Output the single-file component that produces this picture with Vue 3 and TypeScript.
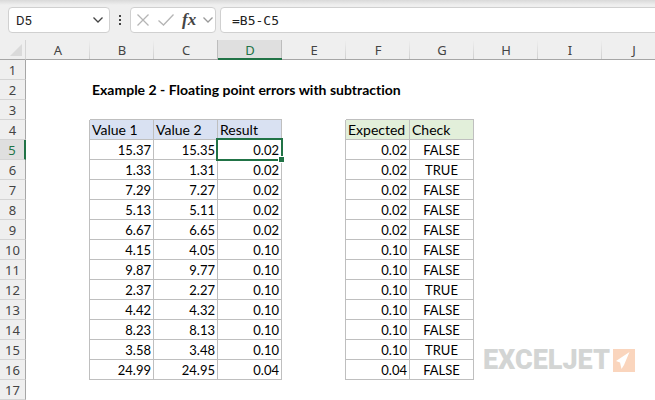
<script setup lang="ts">
import { ref } from 'vue'

type Row = [string, string, string, string, string]

const columns = ['A', 'B', 'C', 'D', 'E', 'F', 'G', 'H', 'I', 'J']
const firstDataRow = 5
const activeRow = 5
const activeColumn = 'D'
const cellName = ref('D5')
const formula = ref('=B5-C5')

const rows: Row[] = [
  ['15.37', '15.35', '0.02', '0.02', 'FALSE'],
  ['1.33', '1.31', '0.02', '0.02', 'TRUE'],
  ['7.29', '7.27', '0.02', '0.02', 'FALSE'],
  ['5.13', '5.11', '0.02', '0.02', 'FALSE'],
  ['6.67', '6.65', '0.02', '0.02', 'FALSE'],
  ['4.15', '4.05', '0.10', '0.10', 'FALSE'],
  ['9.87', '9.77', '0.10', '0.10', 'FALSE'],
  ['2.37', '2.27', '0.10', '0.10', 'TRUE'],
  ['4.42', '4.32', '0.10', '0.10', 'FALSE'],
  ['8.23', '8.13', '0.10', '0.10', 'FALSE'],
  ['3.58', '3.48', '0.10', '0.10', 'TRUE'],
  ['24.99', '24.95', '0.04', '0.04', 'FALSE'],
]
</script>

<template>
  <main class="app">
    <header class="bar">
      <div class="box name-box">
        <input v-model="cellName" class="name" type="text" aria-label="Name box" />
        <button class="icon" type="button" aria-label="Show names">
          <svg width="12" height="8" viewBox="0 0 12 8"><path d="M1.500 1.500 6 6l4.500-4.500" fill="none" stroke="#444" stroke-width="1.300" /></svg>
        </button>
      </div>
      <svg class="grip" width="4" height="12" viewBox="0 0 4 12" fill="#444"><path d="M1 1h2v2H1zM1 5h2v2H1zM1 9h2v2H1z" /></svg>
      <div class="box tools">
        <button class="icon" type="button" aria-label="Cancel">
          <svg width="14" height="14" viewBox="0 0 14 14"><path d="m1.500 1.500 11 11m0-11-11 11" fill="none" stroke="#b5b5b5" stroke-width="1.300" /></svg>
        </button>
        <button class="icon" type="button" aria-label="Enter">
          <svg width="18" height="14" viewBox="0 0 18 14"><path d="m1.500 7.500 5 4.500L16.500 1.500" fill="none" stroke="#b5b5b5" stroke-width="1.300" /></svg>
        </button>
        <button class="icon fx" type="button" aria-label="Insert function"><i>fx</i></button>
        <button class="icon" type="button" aria-label="More functions">
          <svg width="10" height="8" viewBox="0 0 10 8"><path d="m.5 1.500 4.500 4.500 4.500-4.500" fill="none" stroke="#999" stroke-width="1.300" /></svg>
        </button>
      </div>
      <input v-model="formula" class="box formula" type="text" aria-label="Formula bar" />
    </header>

    <div class="sheet">
      <table>
        <colgroup>
          <col class="gutter" />
          <col v-for="c in columns" :key="c" class="column" />
        </colgroup>
        <thead>
          <tr>
            <th class="corner"><svg width="12" height="12" viewBox="0 0 12 12"><path d="M12 0v12H0z" fill="#dadada" /></svg></th>
            <th v-for="c in columns" :key="c" scope="col" class="col-head" :class="{ active: c === activeColumn, before: c === 'C' }">{{ c }}</th>
          </tr>
        </thead>
        <tbody>
          <tr>
            <th scope="row">1</th>
            <td v-for="c in columns" :key="c"></td>
          </tr>
          <tr>
            <th scope="row">2</th>
            <td></td>
            <td class="title" colspan="9">Example 2 - Floating point errors with subtraction</td>
          </tr>
          <tr>
            <th scope="row">3</th>
            <td></td>
            <td class="above"></td><td class="above"></td><td class="above"></td>
            <td></td>
            <td class="above"></td><td class="above"></td>
            <td></td><td></td><td></td>
          </tr>
          <tr>
            <th scope="row">4</th>
            <td class="edge"></td>
            <td class="cell label blue">Value 1</td>
            <td class="cell label blue">Value 2</td>
            <td class="cell label blue">Result</td>
            <td class="edge"></td>
            <td class="cell label green">Expected</td>
            <td class="cell label green">Check</td>
            <td></td><td></td><td></td>
          </tr>
          <tr v-for="(r, i) in rows" :key="i">
            <th scope="row" :class="{ active: i + firstDataRow === activeRow }">{{ i + firstDataRow }}</th>
            <td class="edge"></td>
            <td class="cell number">{{ r[0] }}</td>
            <td class="cell number">{{ r[1] }}</td>
            <td class="cell number" :class="{ selected: i + firstDataRow === activeRow }">{{ r[2] }}</td>
            <td class="edge"></td>
            <td class="cell number">{{ r[3] }}</td>
            <td class="cell check">{{ r[4] }}</td>
            <td></td><td></td><td></td>
          </tr>
          <tr>
            <th scope="row">17</th>
            <td v-for="c in columns" :key="c"></td>
          </tr>
        </tbody>
      </table>
      <div class="brand">
        <span>EXCELJET</span>
        <svg width="22" height="23" viewBox="0 0 22 23"><path d="M0 0h22v23H0z" fill="#fad5bd" /><path d="M16.500 3 3 12l4 1.500 1.500 6.500 2.500-4z" fill="#fff" /></svg>
      </div>
    </div>
  </main>
</template>

<style>
body {
  margin: 0;
  background: #fff;
}
</style>

<style scoped>
.app {
  min-height: 100vh;
  overflow: hidden;
  font-family: Lato, "Liberation Sans", sans-serif;
  font-size: 13px;
  font-variant-ligatures: none;
  color: #000;
}
.bar {
  display: flex;
  align-items: center;
  height: 40px;
  box-sizing: border-box;
  padding: 7px 0 7px 8px;
  background: linear-gradient(#d9d9d9, #efefef 5px);
}
.box {
  display: flex;
  align-items: center;
  box-sizing: border-box;
  height: 26px;
  border: 1px solid #d0d0d0;
  border-radius: 4px;
  background: #fff;
}
input {
  margin: 0;
  padding: 0;
  border: 0;
  outline: 0;
  min-width: 0;
  color: #222;
}
.name-box {
  width: 102px;
  padding: 0 5px 0 7px;
}
.name {
  flex: 1;
  font: 13px Roboto, sans-serif;
}
.icon {
  display: flex;
  margin: 0;
  padding: 0;
  border: 0;
  background: none;
}
.grip {
  margin: 0 8px;
}
.tools {
  width: 86px;
  gap: 7px;
  padding: 0 0 0 5px;
}
.fx {
  width: 14px;
  font: bold 17px/20px "Liberation Serif", serif;
  color: #444;
}
.formula {
  flex: 1;
  margin: 0 -8px 0 4px;
  padding: 0 11px;
  font: 13px "DejaVu Sans Mono", monospace;
}
.sheet {
  position: relative;
  background: linear-gradient(#efefef 19px, #a6a6a6 19px, #a6a6a6 20px, #fff 20px);
}
table {
  width: 666px;
  table-layout: fixed;
  border-collapse: separate;
  border-spacing: 0;
}
.gutter {
  width: 26px;
}
.column {
  width: 64px;
}
th,
td {
  box-sizing: border-box;
  height: 20px;
  padding: 0;
  line-height: 18px;
  white-space: nowrap;
}
th {
  border-right: 1px solid #a6a6a6;
  border-bottom: 1px solid #d4d4d4;
  background: #efefef;
  color: #444;
  font-family: "Noto Sans", sans-serif;
  font-size: 13px;
  font-weight: 400;
}
th.corner {
  border-right-color: #d4d4d4;
  border-bottom-color: #a6a6a6;
  padding-right: 3px;
}
.corner svg {
  display: block;
  margin-left: auto;
}
th.col-head {
  border-right: 0;
  border-bottom-color: #a6a6a6;
  background: linear-gradient(#efefef, #cfcfcf) right / 1px 100% no-repeat #efefef;
}
th.col-head.before {
  background: linear-gradient(#bdbdbd, #bdbdbd) right / 1px 100% no-repeat #efefef;
}
th.col-head.active {
  background:
    linear-gradient(#217346, #217346) bottom / 100% 1px no-repeat,
    linear-gradient(#bdbdbd, #bdbdbd) right / 1px 100% no-repeat #dfdfdf;
  border-bottom-color: #217346;
  color: #217346;
}
th.active {
  background: #dfdfdf;
  color: #217346;
}
tbody th.active {
  border-right: 2px solid #217346;
}
.title {
  padding-left: 2px;
  font-size: 14px;
  font-weight: 700;
}
.above {
  border-bottom: 1px solid #bfbfbf;
}
.edge {
  border-right: 1px solid #bfbfbf;
}
.cell {
  padding: 0 2px;
  border-right: 1px solid #bfbfbf;
  border-bottom: 1px solid #bfbfbf;
}
.label {
  font-size: 14px;
}
.blue {
  background: #d9e1f2;
}
.green {
  background: #e2efda;
}
.number {
  text-align: right;
}
.check {
  text-align: center;
}
.selected {
  position: relative;
}
.selected::before {
  content: "";
  position: absolute;
  inset: -2px;
  border: 2px solid #217346;
}
.selected::after {
  content: "";
  position: absolute;
  right: -4px;
  bottom: -4px;
  width: 5px;
  height: 5px;
  border: 1px solid #fff;
  background: #217346;
}
.brand {
  position: absolute;
  right: 20px;
  bottom: 28px;
  display: flex;
  align-items: center;
  gap: 3px;
  color: #d3d5d4;
  font: 900 27px/23px Roboto, sans-serif;
}
</style>
